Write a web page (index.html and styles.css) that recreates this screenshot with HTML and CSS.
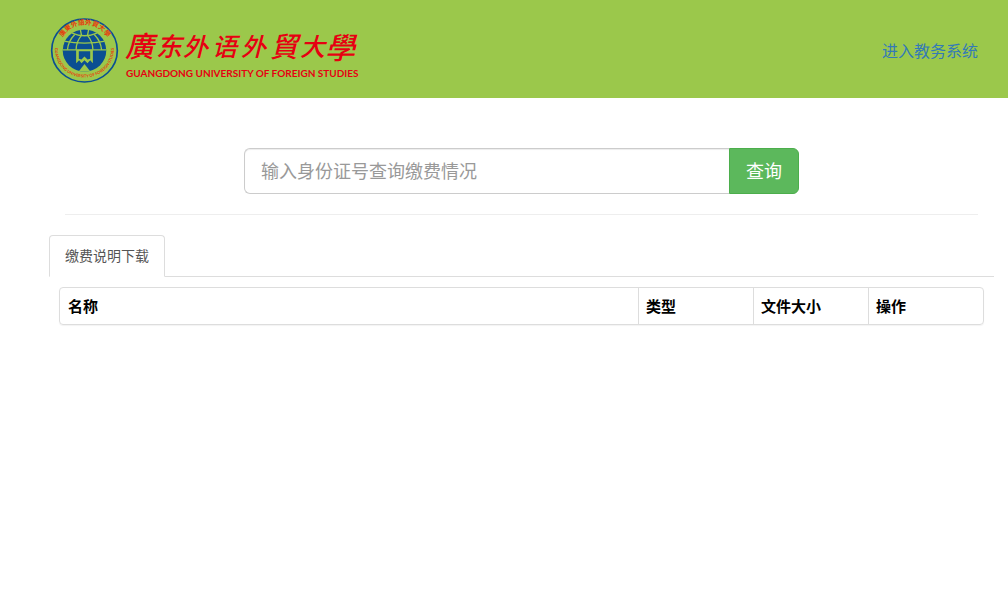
FILE: index.html
```html
<!DOCTYPE html>
<html lang="zh-CN">
<head>
    <meta charset="UTF-8">
    <meta name="viewport" content="width=device-width, initial-scale=1.0">
    <title>缴费查询</title>
    <link rel="stylesheet" href="styles.css">
</head>
<body>
    <header class="header">
        <div class="brand">
            <svg class="emblem" viewBox="30 20 206 200" aria-hidden="true">
                <defs>
                    <path id="arcTop" d="M62 96 A74 69 0 0 1 206 96"/>
                    <path id="arcBottom" d="M46 104 A88 84 0 1 0 220 104"/>
                    <clipPath id="globe"><ellipse cx="133" cy="120" rx="65" ry="63"/></clipPath>
                </defs>
                <ellipse class="ring" cx="133" cy="120" rx="98" ry="94"/>
                <text class="arc-cn"><textPath href="#arcTop" startOffset="50%">廣東外語外貿大學</textPath></text>
                <text class="arc-en"><textPath href="#arcBottom" startOffset="50%">GUANGDONG UNIVERSITY OF FOREIGN STUDIES</textPath></text>
                <g clip-path="url(#globe)">
                    <rect class="blue" x="66" y="56" width="134" height="128"/>
                    <!-- parallels and meridians of the upper half -->
                    <path class="grid" d="M96 68 Q133 84 170 68 M70 92 Q133 104 196 92 M66 118 H200"/>
                    <path class="grid" d="M120 54 L124 75 Q108 94 108 118 M146 54 L142 75 Q158 94 158 118"/>
                    <path class="grid" d="M104 72 Q84 92 82 118 M162 72 Q182 92 184 118"/>
                    <!-- open book and peak of the lower half -->
                    <path class="green" d="M108 118 V158 L117 149 L124 158 L133 149 L142 158 L150 149 L158 158 V118Z"/>
                    <path class="blue" d="M116 122 H150 V145 L142 147 L133 138 L124 147 L116 145Z"/>
                    <path class="green" d="M133 160 L153 186 H113Z"/>
                </g>
            </svg>
            <svg class="wordmark" viewBox="0 0 236 62" role="img" aria-label="广东外语外贸大学">
                <g class="calligraphy">
                    <text x="-1" y="38" font-size="29">廣</text>
                    <text x="30" y="37" font-size="26">东</text>
                    <text x="57" y="37" font-size="25">外</text>
                    <text x="86" y="37" font-size="25">语</text>
                    <text x="115" y="37" font-size="25">外</text>
                    <text x="144" y="38" font-size="28">貿</text>
                    <text x="174" y="37" font-size="25">大</text>
                    <text x="199" y="40" font-size="30">學</text>
                </g>
                <text class="name-en" x="0" y="58">GUANGDONG UNIVERSITY OF FOREIGN STUDIES</text>
            </svg>
        </div>
        <a class="system-link" href="#">进入教务系统</a>
    </header>

    <main class="content">
        <form class="search">
            <input class="search-input" type="text" aria-label="身份证号" placeholder="输入身份证号查询缴费情况">
            <button class="search-btn" type="button">查询</button>
        </form>
        <hr>
        <nav class="tabs">
            <a class="tab" href="#files">缴费说明下载</a>
        </nav>
        <div class="panel" id="files">
            <table class="file-table">
                <thead>
                    <tr>
                        <th>名称</th>
                        <th class="narrow">类型</th>
                        <th class="narrow">文件大小</th>
                        <th class="narrow">操作</th>
                    </tr>
                </thead>
            </table>
        </div>
    </main>
</body>
</html>
```
FILE: styles.css
```css
* {
    box-sizing: border-box;
}
body {
    margin: 0;
    background-color: #fff;
    color: #000;
    font-family: "Noto Sans CJK SC", sans-serif;
    font-size: 14px;
    line-height: 20px;
}

/* header */
.header {
    display: flex;
    justify-content: space-between;
    align-items: center;
    height: 98px;
    padding: 0 30px 0 50px;
    background-color: #9bc84b;
}
.brand {
    display: flex;
    align-items: center;
    gap: 7px;
    padding-top: 2px;
}
.emblem {
    width: 69px;
    height: 67px;
}
.wordmark {
    width: 236px;
    height: 62px;
    overflow: visible;
}
.ring {
    fill: none;
    stroke: #0b4f92;
    stroke-width: 5;
}
.blue {
    fill: #0b4f92;
}
.green {
    fill: #9bc84b;
}
.grid {
    fill: none;
    stroke: #9bc84b;
    stroke-width: 4;
}
.arc-cn,
.arc-en {
    fill: #e8380d;
    font-weight: bold;
    text-anchor: middle;
}
.arc-cn {
    font-family: "Noto Sans CJK TC", sans-serif;
    font-size: 20px;
}
.arc-en {
    font-family: Lato, sans-serif;
    font-size: 12px;
}
.calligraphy {
    fill: #e60012;
    font-family: "Noto Sans CJK TC", sans-serif;
    font-style: italic;
    font-weight: 500;
}
.name-en {
    fill: #e60012;
    font-family: Lato, sans-serif;
    font-size: 10px;
    font-weight: bold;
}
.system-link {
    padding-top: 2px;
    color: #337ab7;
    font-size: 16px;
    text-decoration: none;
}

/* search */
.content {
    padding: 50px 14px 0 49px;
}
.search {
    display: flex;
    max-width: 555px;
    margin: 0 auto;
}
.search-input {
    flex: 1;
    min-width: 0;
    height: 46px;
    padding: 8px 16px 10px;
    border: 1px solid #ccc;
    border-right: 0;
    border-radius: 6px 0 0 6px;
    box-shadow: inset 0 1px 1px rgba(0,0,0,0.075);
    font-family: inherit;
    font-size: 18px;
}
.search-input::placeholder {
    color: #999;
}
.search-btn {
    width: 70px;
    height: 46px;
    padding: 0 0 2px;
    border: 1px solid #4cae4c;
    border-radius: 0 6px 6px 0;
    background-color: #5cb85c;
    color: #fff;
    font-family: inherit;
    font-size: 18px;
    cursor: pointer;
}
.search-btn:hover {
    background-color: #449d44;
}
hr {
    margin: 20px 16px;
    border: 0;
    border-top: 1px solid #eee;
}

/* tabs and table */
.tabs {
    display: flex;
    border-bottom: 1px solid #ddd;
}
.tab {
    margin-bottom: -1px;
    padding: 9px 15px 11px;
    border: 1px solid #ddd;
    border-bottom-color: #fff;
    border-radius: 4px 4px 0 0;
    background-color: #fff;
    color: #555;
    text-decoration: none;
}
.panel {
    margin: 10px;
    border: 1px solid #ddd;
    border-radius: 4px;
    box-shadow: 0 1px 1px rgba(0,0,0,0.05);
}
.file-table {
    width: 100%;
    border-spacing: 0;
    table-layout: fixed;
    font-size: 15px;
}
.file-table th {
    padding: 8px;
    text-align: left;
}
.file-table .narrow {
    width: 115px;
    padding-left: 7px;
    border-left: 1px solid #ddd;
}
```
